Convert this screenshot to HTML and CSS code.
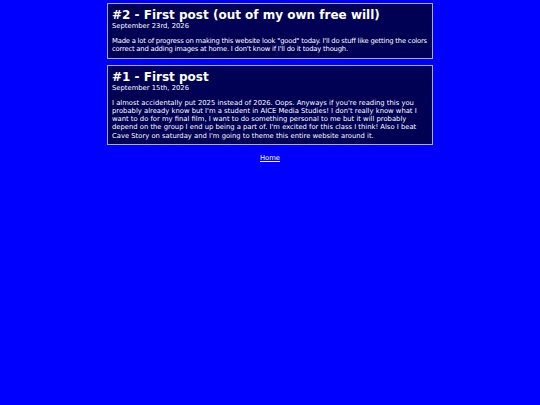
FILE: index.html
```html
<!DOCTYPE html>
<html>
<head>
<meta charset="utf-8">
<link rel="stylesheet" href="styles.css">
</head>
<body>
<main class="posts">
  <article class="post">
    <h2 class="post-title">#2 - First post (out of my own free will)</h2>
    <p class="post-date">September 23rd, 2026</p>
    <p class="post-body post-body-tight">Made a lot of progress on making this website look "good" today. I'll do stuff like getting the colors correct and adding images at home. I don't know if I'll do it today though.</p>
  </article>
  <article class="post">
    <h2 class="post-title">#1 - First post</h2>
    <p class="post-date">September 15th, 2026</p>
    <p class="post-body">I almost accidentally put 2025 instead of 2026. Oops. Anyways if you're reading this you probably already know but I'm a student in AICE Media Studies! I don't really know what I want to do for my final film, I want to do something personal to me but it will probably depend on the group I end up being a part of. I'm excited for this class I think! Also I beat Cave Story on saturday and I'm going to theme this entire website around it.</p>
  </article>
  <nav class="footer-nav"><a href="#" class="home-link">Home</a></nav>
</main>
</body>
</html>
```

FILE: styles.css
```css
html, body {
  margin: 0;
  padding: 0;
  background: #0000ff;
}
body {
  font-family: "DejaVu Sans", Verdana, sans-serif;
  color: #ffffff;
}
.posts {
  display: flex;
  flex-direction: column;
  align-items: center;
  padding-top: 3px;
  gap: 6px;
}
.post {
  width: 317px;
  background: #000055;
  border: 1px solid #aaaaff;
  padding: 4px 3px 4px 4px;
}
.post-title {
  margin: 0;
  font-size: 12px;
  line-height: 14px;
  font-weight: bold;
}
.post-date {
  margin: 0;
  font-size: 6.8px;
  line-height: 8px;
}
.post-body {
  margin: 7px 0 0 0;
  font-size: 6.8px;
  line-height: 8.3px;
}
.post-body-tight {
  letter-spacing: -0.2px;
}
.footer-nav {
  margin-top: 3px;
  text-align: center;
  font-size: 6.8px;
  line-height: 8px;
}
.home-link {
  color: #ffffff;
}
```
